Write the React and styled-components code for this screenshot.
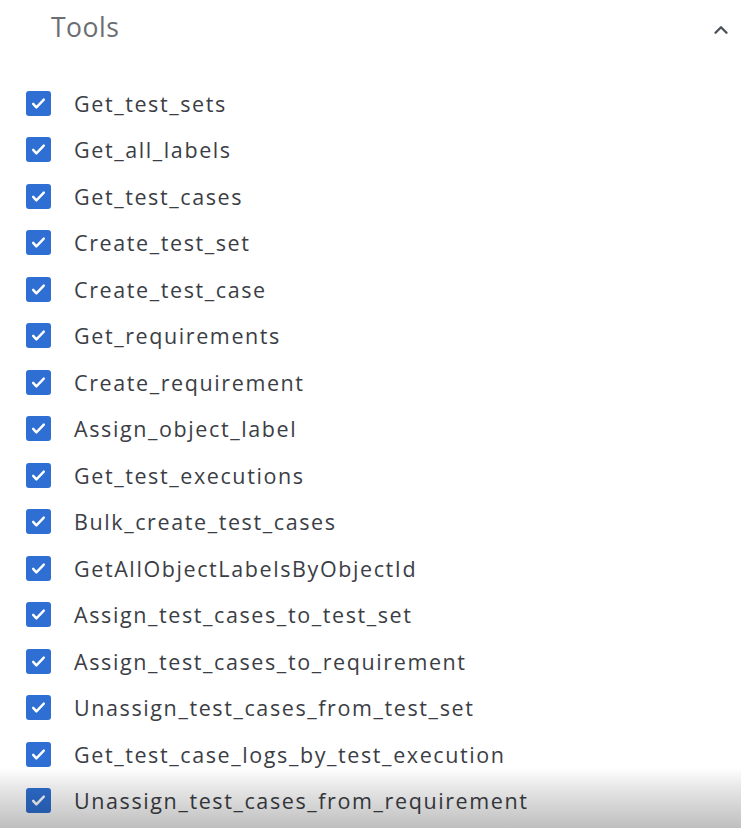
import React from "react";
import styled, { createGlobalStyle } from "styled-components";

const Global = createGlobalStyle`
  html, body { margin: 0; padding: 0; background: #fff; }
  body { font-family: "Open Sans", "Noto Sans", sans-serif; }
`;

const Page = styled.div`
  position: relative;
  width: 741px;
  height: 828px;
  overflow: hidden;
  background: #fff;
`;

const Header = styled.div`
  display: flex;
  align-items: center;
  justify-content: space-between;
  height: 54px;
  padding: 0 9px 0 51px;
`;

const Title = styled.div`
  font-size: 26.5px;
  color: #6b6e72;
  letter-spacing: 0.5px;
`;

const Chevron = styled.svg`
  width: 22px;
  height: 22px;
  margin-top: 6px;
`;

const List = styled.div`
  display: flex;
  flex-direction: column;
  padding: 26px 0 0 26px;
`;

const Row = styled.label`
  display: flex;
  align-items: center;
  height: 46.5px;
  gap: 23px;
`;

const Box = styled.span`
  display: flex;
  align-items: center;
  justify-content: center;
  width: 25px;
  height: 25px;
  border-radius: 3px;
  background: #2f6fd3;
  flex: none;
`;

const Label = styled.span`
  font-size: 21.5px;
  color: #3b3e45;
  letter-spacing: 1.6px;
`;

const Shade = styled.div`
  position: absolute;
  left: 0;
  right: 0;
  bottom: 0;
  height: 60px;
  pointer-events: none;
  background: linear-gradient(to bottom, rgba(0,0,0,0) 0%, rgba(0,0,0,0.1) 35%, rgba(0,0,0,0.25) 100%);
`;

const items = [
  "Get_test_sets",
  "Get_all_labels",
  "Get_test_cases",
  "Create_test_set",
  "Create_test_case",
  "Get_requirements",
  "Create_requirement",
  "Assign_object_label",
  "Get_test_executions",
  "Bulk_create_test_cases",
  "GetAllObjectLabelsByObjectId",
  "Assign_test_cases_to_test_set",
  "Assign_test_cases_to_requirement",
  "Unassign_test_cases_from_test_set",
  "Get_test_case_logs_by_test_execution",
  "Unassign_test_cases_from_requirement",
];

const Check = () => (
  <svg width="17" height="17" viewBox="0 0 24 24" fill="none">
    <path d="M4.5 12.5l4.5 5L19.5 6.5" stroke="#fff" strokeWidth="3.4" strokeLinecap="round" strokeLinejoin="round" />
  </svg>
);

export default function App() {
  return (
    <Page>
      <Global />
      <Header>
        <Title>Tools</Title>
        <Chevron viewBox="0 0 24 24" fill="none">
          <path d="M6 15l6-6 6 6" stroke="#4a5159" strokeWidth="2.6" strokeLinecap="round" strokeLinejoin="round" />
        </Chevron>
      </Header>
      <List>
        {items.map((t) => (
          <Row key={t}>
            <Box><Check /></Box>
            <Label>{t}</Label>
          </Row>
        ))}
      </List>
      <Shade />
    </Page>
  );
}
